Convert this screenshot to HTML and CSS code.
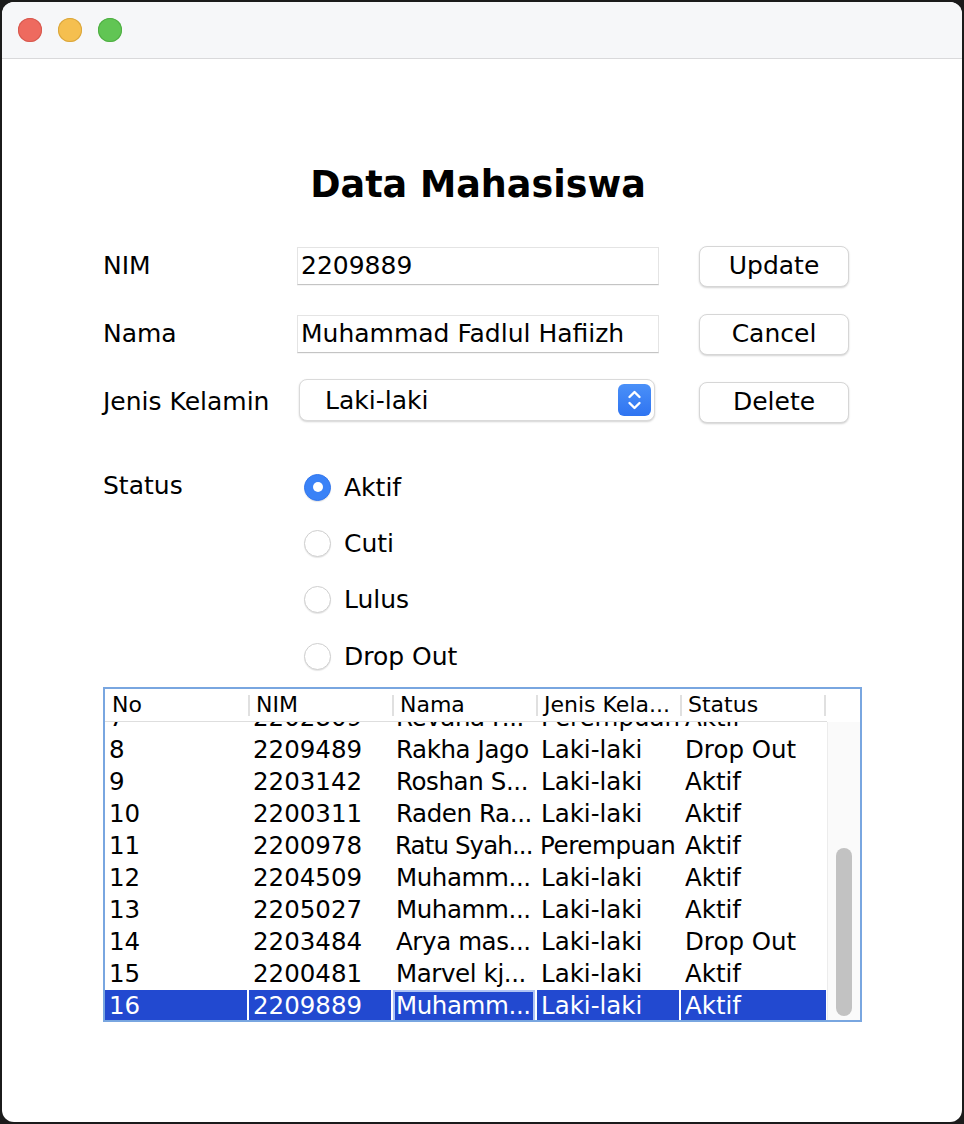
FILE: index.html
```html
<!DOCTYPE html>
<html lang="id">
<head>
<meta charset="utf-8">
<title>Data Mahasiswa</title>
<link rel="stylesheet" href="styles.css">
</head>
<body>
<div class="window">
  <div class="titlebar">
    <span class="light red"></span>
    <span class="light yellow"></span>
    <span class="light green"></span>
  </div>
  <div class="content">
    <h1 class="title">Data Mahasiswa</h1>
    <div class="form">
      <div class="label">NIM</div>
      <div class="field">2209889</div>
      <div class="button">Update</div>

      <div class="label">Nama</div>
      <div class="field">Muhammad Fadlul Hafiizh</div>
      <div class="button">Cancel</div>

      <div class="label">Jenis Kelamin</div>
      <div class="combo">
        <span class="combo-text">Laki-laki</span>
        <span class="stepper">
          <svg width="33" height="32" viewBox="0 0 33 32">
            <path d="M11.5 13 L16.5 8 L21.5 13" fill="none" stroke="#fff" stroke-width="2.4" stroke-linecap="round" stroke-linejoin="round"/>
            <path d="M11.5 19 L16.5 24 L21.5 19" fill="none" stroke="#fff" stroke-width="2.4" stroke-linecap="round" stroke-linejoin="round"/>
          </svg>
        </span>
      </div>
      <div class="button">Delete</div>
    </div>

    <div class="status">
      <div class="label status-label">Status</div>
      <div class="radios">
        <div class="radio-row"><span class="radio checked"></span><span>Aktif</span></div>
        <div class="radio-row"><span class="radio"></span><span>Cuti</span></div>
        <div class="radio-row"><span class="radio"></span><span>Lulus</span></div>
        <div class="radio-row"><span class="radio"></span><span>Drop Out</span></div>
      </div>
    </div>

    <div class="table">
      <div class="thead">
        <div class="th">No</div>
        <div class="th">NIM</div>
        <div class="th">Nama</div>
        <div class="th">Jenis Kela...</div>
        <div class="th">Status</div>
      </div>
      <div class="tbody">
        <div class="rows">
          <div class="rows-inner">
            <div class="tr"><div class="td">7</div><div class="td">2202809</div><div class="td tight">Revana F...</div><div class="td">Perempuan</div><div class="td">Aktif</div></div>
            <div class="tr"><div class="td">8</div><div class="td">2209489</div><div class="td tight">Rakha Jago</div><div class="td">Laki-laki</div><div class="td">Drop Out</div></div>
            <div class="tr"><div class="td">9</div><div class="td">2203142</div><div class="td tight">Roshan S...</div><div class="td">Laki-laki</div><div class="td">Aktif</div></div>
            <div class="tr"><div class="td">10</div><div class="td">2200311</div><div class="td tight">Raden Ra...</div><div class="td">Laki-laki</div><div class="td">Aktif</div></div>
            <div class="tr"><div class="td">11</div><div class="td">2200978</div><div class="td tighter">Ratu Syah...</div><div class="td tight">Perempuan</div><div class="td">Aktif</div></div>
            <div class="tr"><div class="td">12</div><div class="td">2204509</div><div class="td tight">Muhamm...</div><div class="td">Laki-laki</div><div class="td">Aktif</div></div>
            <div class="tr"><div class="td">13</div><div class="td">2205027</div><div class="td tight">Muhamm...</div><div class="td">Laki-laki</div><div class="td">Aktif</div></div>
            <div class="tr"><div class="td">14</div><div class="td">2203484</div><div class="td tight">Arya mas...</div><div class="td">Laki-laki</div><div class="td">Drop Out</div></div>
            <div class="tr"><div class="td">15</div><div class="td">2200481</div><div class="td tight">Marvel kj...</div><div class="td">Laki-laki</div><div class="td">Aktif</div></div>
            <div class="tr selected"><div class="td">16</div><div class="td">2209889</div><div class="td tight focus">Muhamm...</div><div class="td">Laki-laki</div><div class="td">Aktif</div></div>
          </div>
        </div>
        <div class="scrollbar"><div class="thumb"></div></div>
      </div>
    </div>
  </div>
</div>
</body>
</html>
```

FILE: styles.css
```css
* { box-sizing: border-box; }

html, body {
  margin: 0;
  padding: 0;
  background: #1b1b1b;
}

body {
  font-family: "DejaVu Sans", "Liberation Sans", sans-serif;
  font-size: 25px;
  color: #000;
}

.window {
  margin: 2px;
  width: 960px;
  height: 1120px;
  background: #fff;
  border-radius: 12px;
  overflow: hidden;
}

.titlebar {
  height: 57px;
  background: #f6f7f9;
  border-bottom: 1px solid #d9d9db;
  display: flex;
  align-items: center;
  gap: 16px;
  padding-left: 16px;
  padding-bottom: 1px;
}

.light {
  width: 24px;
  height: 24px;
  border-radius: 50%;
  display: block;
}
.light.red { background: #ee6a5f; box-shadow: inset 0 0 0 1px #d65a50; }
.light.yellow { background: #f5bf4f; box-shadow: inset 0 0 0 1px #d9a63e; }
.light.green { background: #61c554; box-shadow: inset 0 0 0 1px #4fae43; }

.content {
  padding-left: 101px;
}

.title {
  margin: 104px 0 0 -101px;
  height: 44px;
  line-height: 44px;
  font-size: 36.5px;
  font-weight: bold;
  text-align: center;
  padding-right: 8px;
}

.form {
  margin-top: 25px;
  display: grid;
  grid-template-columns: 154px 362px 150px;
  column-gap: 40px;
  grid-auto-rows: 68px;
  align-items: center;
}

.label {
  line-height: 30px;
  white-space: nowrap;
}

.field {
  height: 38px;
  line-height: 36px;
  padding-left: 3px;
  background: #fff;
  border: 1px solid #e4e4e4;
  border-bottom-color: #c4c4c4;
  box-shadow: 0 1px 0 rgba(0,0,0,0.04);
  white-space: nowrap;
  overflow: hidden;
}

.combo {
  margin: 0 0 4px 2px;
  width: 356px;
  height: 42px;
  border: 1px solid #dadada;
  border-radius: 8px;
  box-shadow: 0 1px 2px rgba(0,0,0,0.18);
  display: flex;
  align-items: center;
  justify-content: space-between;
  padding: 0 3px 0 25px;
  background: #fff;
}
.combo-text { line-height: 40px; padding-top: 1px; }

.stepper {
  width: 33px;
  height: 32px;
  border-radius: 6px;
  background: linear-gradient(#4a90f8, #2f74f1);
  display: block;
}
.stepper svg { display: block; }

.button {
  height: 41px;
  line-height: 37px;
  text-align: center;
  background: #fff;
  border: 1px solid #d6d6d6;
  border-radius: 8px;
  box-shadow: 0 1px 2px rgba(0,0,0,0.18);
}

.status {
  margin-top: 23px;
  display: grid;
  grid-template-columns: 194px 1fr;
}

.status-label {
  height: 56px;
  line-height: 54px;
}

.radios {
  padding-left: 7px;
}

.radio-row {
  height: 56.3px;
  display: flex;
  align-items: center;
  gap: 13px;
}

.radio {
  width: 27px;
  height: 27px;
  border-radius: 50%;
  background: #fff;
  border: 1px solid #cfcfcf;
  box-shadow: 0 1px 1px rgba(0,0,0,0.1);
  display: flex;
  align-items: center;
  justify-content: center;
}
.radio.checked {
  background: #3a82f7;
  border-color: #3176ee;
}
.radio.checked::after {
  content: "";
  width: 10px;
  height: 10px;
  border-radius: 50%;
  background: #fff;
}

.table {
  margin-top: 3px;
  width: 759px;
  height: 335px;
  border: 2px solid #79a6e0;
  display: flex;
  flex-direction: column;
  background: #fff;
}

.thead {
  height: 33px;
  display: flex;
  border-bottom: 1px solid #dedede;
  width: 722px;
  font-size: 22px;
  flex-shrink: 0;
}

.th {
  width: 144px;
  padding-left: 7px;
  line-height: 32px;
  position: relative;
  white-space: nowrap;
}
.th::after {
  content: "";
  position: absolute;
  right: -1px;
  top: 6px;
  width: 2px;
  height: 21px;
  background: #e0e0e0;
}

.tbody {
  flex: 1;
  display: flex;
  overflow: hidden;
}

.rows {
  width: 722px;
  overflow: hidden;
  font-size: 24.5px;
}

.rows-inner {
  margin-top: -20px;
}

.tr {
  display: flex;
  height: 32px;
}

.td {
  width: 144px;
  border-right: 2px solid #fff;
  padding-left: 4px;
  line-height: 32px;
  white-space: nowrap;
}
.td:last-child {
  width: 145px;
  border-right: 0;
}
.td.tight {
  letter-spacing: -0.4px;
  padding-left: 3px;
}
.td.tighter {
  letter-spacing: -0.9px;
  padding-left: 2px;
}

.tr.selected .td {
  background: #2249d0;
  color: #fff;
}
.tr.selected .td.focus {
  box-shadow: inset 0 0 0 2px #b0c4f4;
}

.scrollbar {
  width: 33px;
  background: #fafafa;
  border-left: 1px solid #ececec;
  padding: 126px 0 0 8px;
}

.thumb {
  width: 16px;
  height: 168px;
  border-radius: 8px;
  background: #c2c2c2;
}
```
